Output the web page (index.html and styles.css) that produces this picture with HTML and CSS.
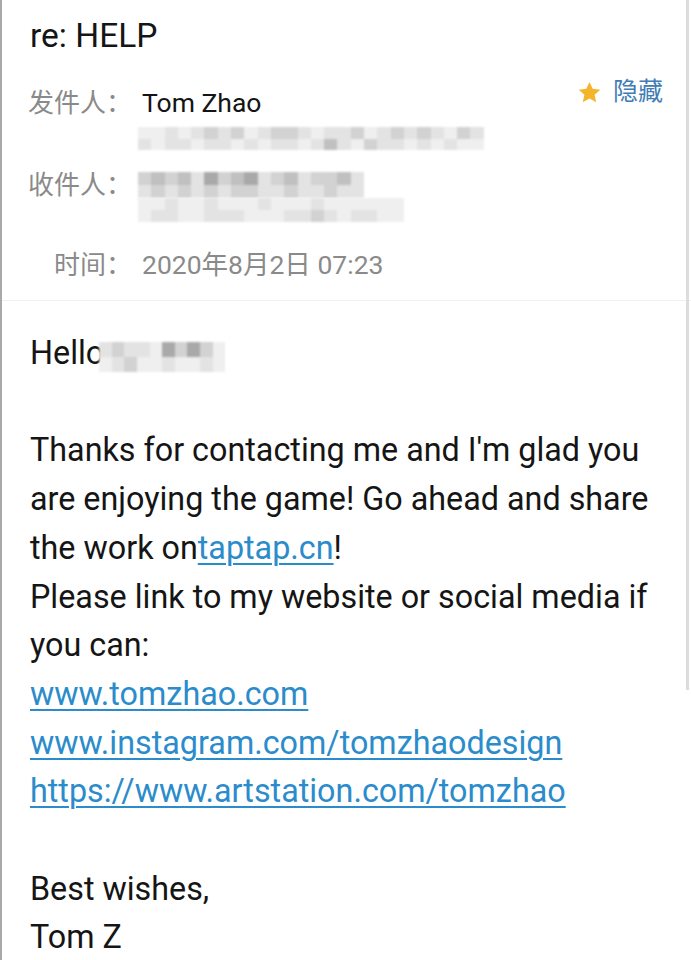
FILE: index.html
```html
<!DOCTYPE html>
<html lang="zh">
<head>
<meta charset="utf-8">
<title>re: HELP</title>
<link rel="stylesheet" href="styles.css">
</head>
<body>
<div class="page">
  <header class="head">
    <h1 class="title">re: HELP</h1>
    <div class="row row-from">
      <div class="label">发件人：</div>
      <div class="value">
        <div class="name">Tom Zhao</div>
        <div class="blur blur-wide">
          <div class="cells"><i class="e"></i><i class="e"></i><i class="a"></i><i class="e"></i><i class="a"></i><i class="b"></i><i class="a"></i><i class="b"></i><i class="e"></i><i class="a"></i><i class="b"></i><i class="b"></i><i class="a"></i><i class="e"></i><i class="a"></i><i class="a"></i><i class="b"></i><i class="e"></i><i class="a"></i><i class="b"></i><i class="a"></i><i class="b"></i><i class="a"></i><i class="e"></i><i class="b"></i><i class="a"></i></div>
          <div class="cells"><i class="a"></i><i class="e"></i><i class="a"></i><i class="a"></i><i class="e"></i><i class="a"></i><i class="a"></i><i class="e"></i><i class="a"></i><i class="e"></i><i class="a"></i><i class="a"></i><i class="e"></i><i class="a"></i><i class="c"></i><i class="a"></i><i class="e"></i><i class="b"></i><i class="a"></i><i class="a"></i><i class="e"></i><i class="a"></i><i class="e"></i><i class="a"></i><i class="e"></i><i class="e"></i></div>
        </div>
      </div>
      <div class="action">
        <svg class="star" width="25" height="25" viewBox="0 0 24 24" aria-hidden="true"><path d="M12 1.8l3.05 6.7 7.3.75-5.45 4.95 1.550 7.2L12 17.7l-6.45 3.7 1.55-7.2L1.65 9.25l7.3-.75z" fill="#f4b52c"/></svg>
        <span class="hide">隐藏</span>
      </div>
    </div>
    <div class="row row-to">
      <div class="label">收件人：</div>
      <div class="value">
        <div class="blur blur-mid">
          <div class="cells"><i class="b"></i><i class="c"></i><i class="b"></i><i class="c"></i><i class="a"></i><i class="d"></i><i class="b"></i><i class="c"></i><i class="d"></i><i class="a"></i><i class="b"></i><i class="c"></i><i class="a"></i><i class="b"></i><i class="b"></i><i class="c"></i><i class="a"></i></div>
          <div class="cells"><i class="a"></i><i class="b"></i><i class="a"></i><i class="b"></i><i class="a"></i><i class="b"></i><i class="a"></i><i class="b"></i><i class="b"></i><i class="a"></i><i class="a"></i><i class="b"></i><i class="a"></i><i class="a"></i><i class="b"></i><i class="a"></i><i class="a"></i></div>
        </div>
        <div class="blur blur-low">
          <div class="cells"><i class="e"></i><i class="e"></i><i class="a"></i><i class="e"></i><i class="e"></i><i class="a"></i><i class="e"></i><i class="e"></i><i class="e"></i><i class="a"></i><i class="e"></i><i class="e"></i><i class="e"></i><i class="a"></i><i class="e"></i><i class="e"></i><i class="e"></i><i class="e"></i><i class="e"></i><i class="e"></i></div>
          <div class="cells"><i class="e"></i><i class="a"></i><i class="a"></i><i class="e"></i><i class="e"></i><i class="a"></i><i class="a"></i><i class="a"></i><i class="e"></i><i class="e"></i><i class="e"></i><i class="a"></i><i class="a"></i><i class="b"></i><i class="a"></i><i class="e"></i><i class="a"></i><i class="a"></i><i class="e"></i><i class="e"></i></div>
        </div>
      </div>
    </div>
    <div class="row row-time">
      <div class="label">时间：</div>
      <div class="value time">2020年8月2日 07:23</div>
    </div>
  </header>
  <main class="mail">
    <p>Hello<span class="blur blur-name"><span class="cells"><i class="a"></i><i class="b"></i><i class="a"></i><i class="a"></i><i class="e"></i><i class="d"></i><i class="b"></i><i class="d"></i><i class="b"></i><i class="e"></i></span><span class="cells"><i class="e"></i><i class="a"></i><i class="b"></i><i class="e"></i><i class="e"></i><i class="a"></i><i class="e"></i><i class="e"></i><i class="a"></i><i class="e"></i></span></span></p>
    <p class="gap">Thanks for contacting me and I'm glad you are enjoying the game! Go ahead and share the work on<a href="#">taptap.cn</a>!<br>Please link to my website or social media if you can:<br><a href="#">www.tomzhao.com</a><br><a href="#">www.instagram.com/tomzhaodesign</a><br><a href="#">https://www.artstation.com/tomzhao</a></p>
    <p class="gap">Best wishes,<br>Tom Z</p>
  </main>
  <div class="scrollbar"></div>
</div>
</body>
</html>
```
FILE: styles.css
```css
html, body {
  margin: 0;
  padding: 0;
  background: #fff;
}
body {
  font-family: Roboto, "Noto Sans CJK SC", sans-serif;
  color: #151515;
}
.page {
  position: relative;
  width: 689px;
  height: 960px;
  border-left: 2px solid #a9a9a9;
  overflow: hidden;
}
.head {
  padding: 0 28px 11px 26px;
  border-bottom: 1px solid #f0f0f0;
}
.title {
  margin: 0;
  font-size: 33.5px;
  font-weight: 400;
  line-height: 72px;
  height: 72px;
  padding-left: 2px;
}
.row {
  display: flex;
  align-items: flex-start;
}
.label {
  width: 104px;
  flex: none;
  font-size: 26px;
  color: #8a8a8a;
  text-align: right;
  white-space: nowrap;
}
.value {
  flex: 1;
  min-width: 0;
  margin-left: 10px;
}
.row-from {
  margin-top: 7px;
}
.row-from .label,
.row-from .name {
  line-height: 48px;
}
.name {
  font-size: 26.5px;
  color: #141414;
}
.action {
  display: flex;
  align-items: center;
  gap: 11px;
  line-height: 26px;
  height: 26px;
}
.star {
  display: block;
}
.hide {
  font-size: 25px;
  color: #3f7db4;
}
.row-to {
  margin-top: 22px;
}
.row-to .label {
  line-height: 26px;
}
.row-time {
  margin-top: 19px;
}
.row-time .label {
  line-height: 48px;
}
.time {
  line-height: 48px;
  font-size: 26.5px;
  color: #8a8a8a;
}
.blur {
  display: flex;
  flex-direction: column;
  filter: blur(1.2px);
  margin-left: -4px;
}
.blur .cells {
  display: flex;
}
.blur i {
  display: block;
  width: 13.3px;
  flex: none;
}
.blur-wide .cells { height: 11.5px; }
.blur-mid .cells { height: 13px; }
.blur-low .cells { height: 12px; }
.blur .a { background: #e3e3e3; }
.blur .b { background: #d2d2d2; }
.blur .c { background: #c0c0c0; }
.blur .d { background: #a9a9a9; }
.blur .e { background: #efefef; }
.mail {
  padding: 28px 20px 0 28px;
  font-size: 32.3px;
  line-height: 48.7px;
}
.mail p {
  margin: 0;
}
.mail .gap {
  margin-top: 48.7px;
}
.mail a {
  color: #2b8ccc;
  text-decoration: underline;
  text-decoration-thickness: 2px;
  text-underline-offset: 4px;
}
.blur-name {
  display: inline-block;
  vertical-align: top;
  margin-top: 13px;
  margin-left: -5px;
  height: 30px;
}
.blur-name .cells {
  display: flex;
  height: 15px;
}
.blur-name i {
  width: 12.6px;
}
.scrollbar {
  position: absolute;
  top: 0;
  right: 2px;
  width: 3px;
  height: 690px;
  background: #dcdcdc;
}
```
